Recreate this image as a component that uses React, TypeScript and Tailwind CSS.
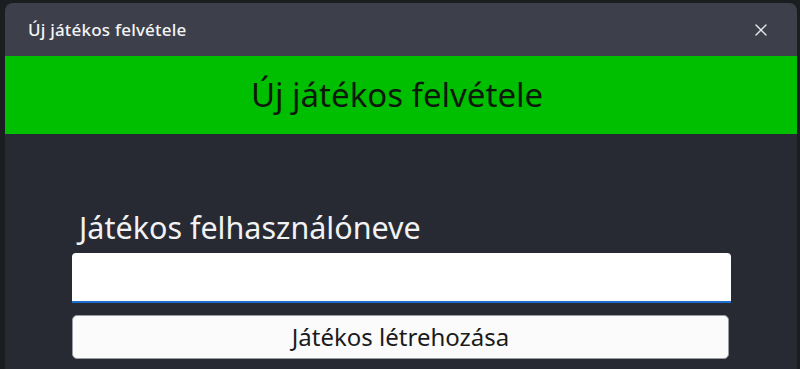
import { X } from "lucide-react";

export default function App() {
  return (
    <div className="h-[369px] w-[800px] overflow-hidden bg-[#1c1d21] pl-[5px] pr-[3px] pt-[3px]" style={{ fontFamily: '"Noto Sans", "Open Sans", sans-serif' }}>
      <div className="flex h-full flex-col overflow-hidden rounded-t-[8px] bg-[#272a33]">
        <div className="flex h-[53px] shrink-0 items-center justify-between bg-[#3d404b] pl-[23px] pr-[26px]">
          <span className="text-[17px] font-medium tracking-[0.2px] text-[#f4f4f6]">Új játékos felvétele</span>
          <X className="h-[20px] w-[20px] text-[#e8e8ec]" strokeWidth={1.6} />
        </div>
        <div className="flex h-[78px] shrink-0 items-center justify-center bg-[#00bf00] pr-[8px]">
          <span className="text-[33px] text-[#0b1a0b]">Új játékos felvétele</span>
        </div>
        <div className="flex flex-col px-[67px] pt-[75px]">
          <label className="pl-[7px] text-[30.5px] leading-[36px] text-[#f2f2f2]">Játékos felhasználóneve</label>
          <input className="mt-[8px] h-[50px] w-[659px] rounded-t-[4px] border-b-2 border-[#1f6fd0] bg-white px-3 outline-none" />
          <button className="mt-[12px] h-[44px] w-[657px] rounded-[5px] border border-[#9a9ca3] bg-[#fbfbfb] text-[24px] text-[#1b1b1b]">
            Játékos létrehozása
          </button>
        </div>
      </div>
    </div>
  );
}
